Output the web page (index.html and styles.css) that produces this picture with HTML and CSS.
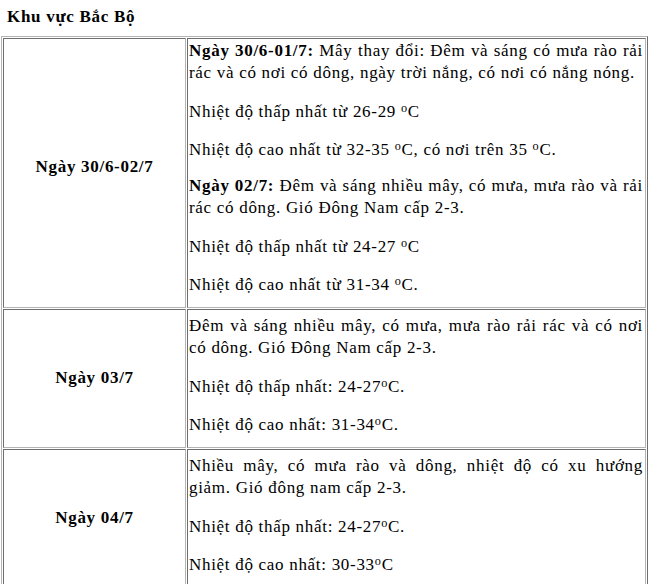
FILE: index.html
```html
<!DOCTYPE html>
<html lang="vi">
<head>
<meta charset="utf-8">
<title>Khu vực Bắc Bộ</title>
<link rel="stylesheet" href="styles.css">
</head>
<body>
<div class="page">
  <h1 class="region">Khu vực Bắc Bộ</h1>
  <table class="forecast">
    <tbody>
      <tr>
        <td class="label label-first"><span class="label-text label-raise">Ngày 30/6-02/7</span></td>
        <td class="text text-first">
          <p class="p-first"><b>Ngày 30/6-01/7:</b> Mây thay đổi: Đêm và sáng có mưa rào rải rác và có nơi có dông, ngày trời nắng, có nơi có nắng nóng.</p>
          <p>Nhiệt độ thấp nhất từ 26-29 <sup>o</sup>C</p>
          <p class="p-tight">Nhiệt độ cao nhất từ 32-35 <sup>o</sup>C, có nơi trên 35 <sup>o</sup>C.</p>
          <p class="p-after-tight"><b>Ngày 02/7:</b> Đêm và sáng nhiều mây, có mưa, mưa rào và rải rác có dông. Gió Đông Nam cấp 2-3.</p>
          <p>Nhiệt độ thấp nhất từ 24-27 <sup>o</sup>C</p>
          <p class="p-last">Nhiệt độ cao nhất từ 31-34 <sup>o</sup>C.</p>
        </td>
      </tr>
      <tr>
        <td class="label"><span class="label-text">Ngày 03/7</span></td>
        <td class="text">
          <p class="p-first">Đêm và sáng nhiều mây, có mưa, mưa rào rải rác và có nơi có dông. Gió Đông Nam cấp 2-3.</p>
          <p>Nhiệt độ thấp nhất: 24-27<sup>o</sup>C.</p>
          <p class="p-last">Nhiệt độ cao nhất: 31-34<sup>o</sup>C.</p>
        </td>
      </tr>
      <tr>
        <td class="label"><span class="label-text">Ngày 04/7</span></td>
        <td class="text">
          <p class="p-first"><span class="just-line">Nhiều mây, có mưa rào và dông, nhiệt độ có xu hướng</span> giảm. Gió đông nam cấp 2-3.</p>
          <p>Nhiệt độ thấp nhất: 24-27<sup>o</sup>C.</p>
          <p class="p-last">Nhiệt độ cao nhất: 30-33<sup>o</sup>C</p>
        </td>
      </tr>
    </tbody>
  </table>
</div>
</body>
</html>
```

FILE: styles.css
```css
html, body {
  margin: 0;
  padding: 0;
  background: #ffffff;
}

.page {
  font-family: "Liberation Serif", "Times New Roman", serif;
  font-size: 17px;
  letter-spacing: 0.7px;
  line-height: 22.5px;
  color: #000000;
  padding: 6px 0 0 1px;
}

.region {
  font-size: 17px;
  font-weight: bold;
  line-height: 22.5px;
  margin: 0 0 7px 6px;
}

.forecast {
  width: 647px;
  table-layout: fixed;
  border-collapse: separate;
  border-spacing: 1px;
  border: 1px solid;
  border-color: #b4b4b4 #6e6e6e #6e6e6e #b4b4b4;
}

.forecast td {
  border: 1px solid;
  border-color: #6e6e6e #b4b4b4 #b4b4b4 #6e6e6e;
}

.label {
  width: 177px;
  padding: 1px 2px;
  text-align: center;
  vertical-align: middle;
  font-weight: bold;
}

.label-text {
  display: block;
}

.label-raise {
  padding-bottom: 10px;
}

.text {
  padding: 5px 2px 1px 1px;
  vertical-align: top;
  text-align: justify;
}

.text-first {
  padding-top: 1px;
}

.text p {
  margin: 0 0 16px;
}

.text .p-tight {
  margin-bottom: 13px;
}

.text .p-last {
  margin-bottom: 9px;
}

.just-line {
  display: block;
  text-align: justify;
  text-align-last: justify;
}

sup {
  font-size: 0.72em;
  line-height: 0;
  vertical-align: 0.45em;
}
```
